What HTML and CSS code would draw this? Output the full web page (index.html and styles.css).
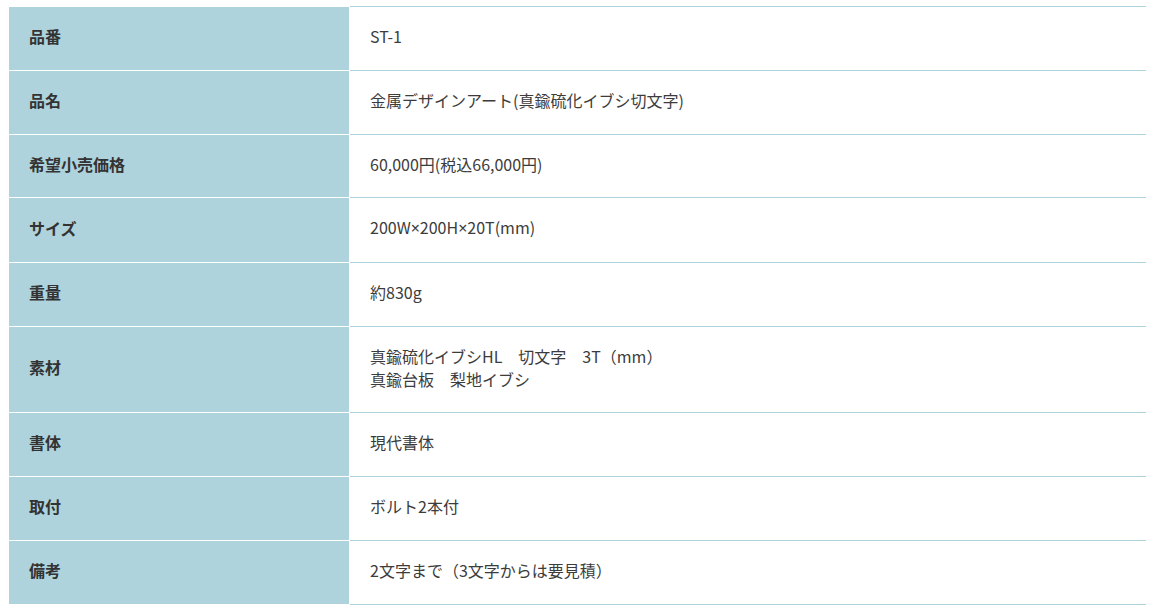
FILE: index.html
```html
<!DOCTYPE html>
<html lang="ja">
<head>
<meta charset="utf-8">
<link rel="stylesheet" href="styles.css">
</head>
<body>
<table class="spec">
  <colgroup>
    <col class="col-head">
    <col class="col-data">
  </colgroup>
  <tbody>
    <tr><th>品番</th><td>ST-1</td></tr>
    <tr><th>品名</th><td>金属デザインアート(真鍮硫化イブシ切文字)</td></tr>
    <tr><th>希望小売価格</th><td>60,000円(税込66,000円)</td></tr>
    <tr><th>サイズ</th><td>200W<span class="mult">×</span>200H<span class="mult">×</span>20T(mm)</td></tr>
    <tr><th>重量</th><td>約830g</td></tr>
    <tr><th>素材</th><td>真鍮硫化イブシHL　切文字　3T（mm）<br>真鍮台板　梨地イブシ</td></tr>
    <tr><th>書体</th><td>現代書体</td></tr>
    <tr><th>取付</th><td>ボルト2本付</td></tr>
    <tr><th>備考</th><td>2文字まで（3文字からは要見積）</td></tr>
  </tbody>
</table>
</body>
</html>
```
FILE: styles.css
```css
html, body {
  background: #ffffff;
}
body {
  margin: 6px 8px 8px 8px;
  font-family: "Noto Sans CJK JP", "Noto Sans", sans-serif;
  font-size: 16px;
  line-height: 22.75px;
  color: #333333;
}
.spec {
  width: 1140px;
  border-collapse: collapse;
  table-layout: fixed;
}
.col-head {
  width: 341px;
}
.spec th,
.spec td {
  padding: 18px 20px 22px 20px;
  text-align: left;
  vertical-align: middle;
}
.spec th {
  background: #afd3dc;
  border: 1px solid #ffffff;
  font-weight: bold;
  color: #333333;
}
.spec td {
  border: 1px solid #afd3dc;
  font-weight: normal;
  color: #3c3c3c;
}
.mult {
  font-family: "Noto Sans", "DejaVu Sans", sans-serif;
}
```
